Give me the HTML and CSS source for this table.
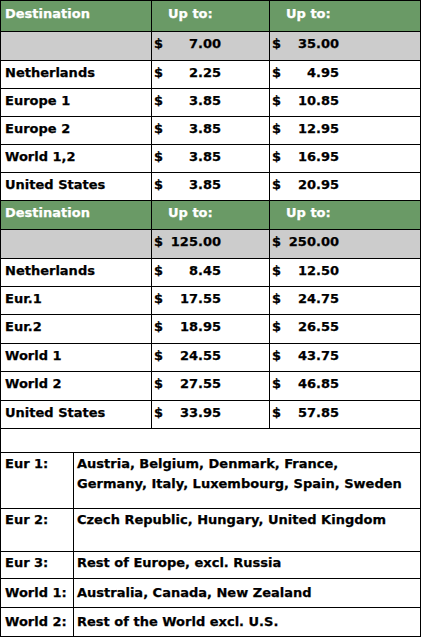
FILE: index.html
```html
<!DOCTYPE html>
<html>
<head>
<meta charset="utf-8">
<link rel="stylesheet" href="styles.css">
</head>
<body>
<div class="rates">
  <div class="cell hdr name">Destination</div>
  <div class="cell hdr up">Up to:</div>
  <div class="cell hdr up">Up to:</div>

  <div class="cell gray"></div>
  <div class="cell gray amt"><span>$</span><span>7.00</span></div>
  <div class="cell gray amt"><span>$</span><span>35.00</span></div>

  <div class="cell name">Netherlands</div>
  <div class="cell amt"><span>$</span><span>2.25</span></div>
  <div class="cell amt"><span>$</span><span>4.95</span></div>

  <div class="cell name">Europe 1</div>
  <div class="cell amt"><span>$</span><span>3.85</span></div>
  <div class="cell amt"><span>$</span><span>10.85</span></div>

  <div class="cell name">Europe 2</div>
  <div class="cell amt"><span>$</span><span>3.85</span></div>
  <div class="cell amt"><span>$</span><span>12.95</span></div>

  <div class="cell name">World 1,2</div>
  <div class="cell amt"><span>$</span><span>3.85</span></div>
  <div class="cell amt"><span>$</span><span>16.95</span></div>

  <div class="cell name">United States</div>
  <div class="cell amt"><span>$</span><span>3.85</span></div>
  <div class="cell amt"><span>$</span><span>20.95</span></div>

  <div class="cell hdr h2 name">Destination</div>
  <div class="cell hdr h2 up">Up to:</div>
  <div class="cell hdr h2 up">Up to:</div>

  <div class="cell gray"></div>
  <div class="cell gray amt"><span>$</span><span>125.00</span></div>
  <div class="cell gray amt"><span>$</span><span>250.00</span></div>

  <div class="cell name">Netherlands</div>
  <div class="cell amt"><span>$</span><span>8.45</span></div>
  <div class="cell amt"><span>$</span><span>12.50</span></div>

  <div class="cell name">Eur.1</div>
  <div class="cell amt"><span>$</span><span>17.55</span></div>
  <div class="cell amt"><span>$</span><span>24.75</span></div>

  <div class="cell name tall">Eur.2</div>
  <div class="cell amt tall"><span>$</span><span>18.95</span></div>
  <div class="cell amt tall"><span>$</span><span>26.55</span></div>

  <div class="cell name">World 1</div>
  <div class="cell amt"><span>$</span><span>24.55</span></div>
  <div class="cell amt"><span>$</span><span>43.75</span></div>

  <div class="cell name tall">World 2</div>
  <div class="cell amt tall"><span>$</span><span>27.55</span></div>
  <div class="cell amt tall"><span>$</span><span>46.85</span></div>

  <div class="cell name">United States</div>
  <div class="cell amt"><span>$</span><span>33.95</span></div>
  <div class="cell amt"><span>$</span><span>57.85</span></div>
</div>
<div class="zones">
  <div class="zcell blank"></div>

  <div class="zcell key r1">Eur 1:</div>
  <div class="zcell val r1">Austria, Belgium, Denmark, France,<br>Germany, Italy, Luxembourg, Spain, Sweden</div>

  <div class="zcell key r2">Eur 2:</div>
  <div class="zcell val r2">Czech Republic, Hungary, United Kingdom</div>

  <div class="zcell key r3">Eur 3:</div>
  <div class="zcell val r3">Rest of Europe, excl. Russia</div>

  <div class="zcell key r4">World 1:</div>
  <div class="zcell val r4">Australia, Canada, New Zealand</div>

  <div class="zcell key r4">World 2:</div>
  <div class="zcell val r4">Rest of the World excl. U.S.</div>
</div>
</body>
</html>
```

FILE: styles.css
```css
html, body {
  margin: 0;
  padding: 0;
  background: #ffffff;
}

body {
  font-family: "DejaVu Sans", "Liberation Sans", sans-serif;
  font-weight: bold;
  font-size: 13px;
  color: #000000;
  -webkit-text-stroke: 0.25px currentColor;
}

.rates {
  display: grid;
  grid-template-columns: 151px 118px 151px;
  width: 421px;
  border-left: 1px solid #000;
  border-top: 1px solid #000;
  box-sizing: border-box;
}

.cell {
  box-sizing: border-box;
  height: 28px;
  border-right: 1px solid #000;
  border-bottom: 1px solid #000;
  display: flex;
  align-items: center;
  padding-bottom: 4px;
  white-space: nowrap;
  line-height: 16px;
}

.cell.name {
  padding-left: 4px;
}

.cell.tall {
  height: 29px;
}

.hdr {
  background: #6a9a66;
  color: #ffffff;
  height: 31px;
}

.hdr.h2 {
  height: 29px;
}

.hdr.up {
  padding-left: 16px;
}

.gray {
  background: #cccccc;
  height: 29px;
}

.amt {
  padding-left: 2px;
}

.amt span:last-child {
  width: 58px;
  text-align: right;
}

.amt span:first-child {
  width: 9px;
}

.zones {
  display: grid;
  grid-template-columns: 73px 347px;
  width: 421px;
  border-left: 1px solid #000;
  box-sizing: border-box;
}

.zcell {
  box-sizing: border-box;
  border-right: 1px solid #000;
  border-bottom: 1px solid #000;
  line-height: 20px;
  padding-top: 1px;
  white-space: nowrap;
}

.zcell.blank {
  grid-column: 1 / 3;
  height: 24px;
}

.zcell.key {
  padding-left: 4px;
}

.zcell.val {
  padding-left: 3px;
}

.r1 { height: 56px; }
.r2 { height: 43px; }
.r3 { height: 27px; }
.r4 { height: 29px; padding-top: 4px; }
```
